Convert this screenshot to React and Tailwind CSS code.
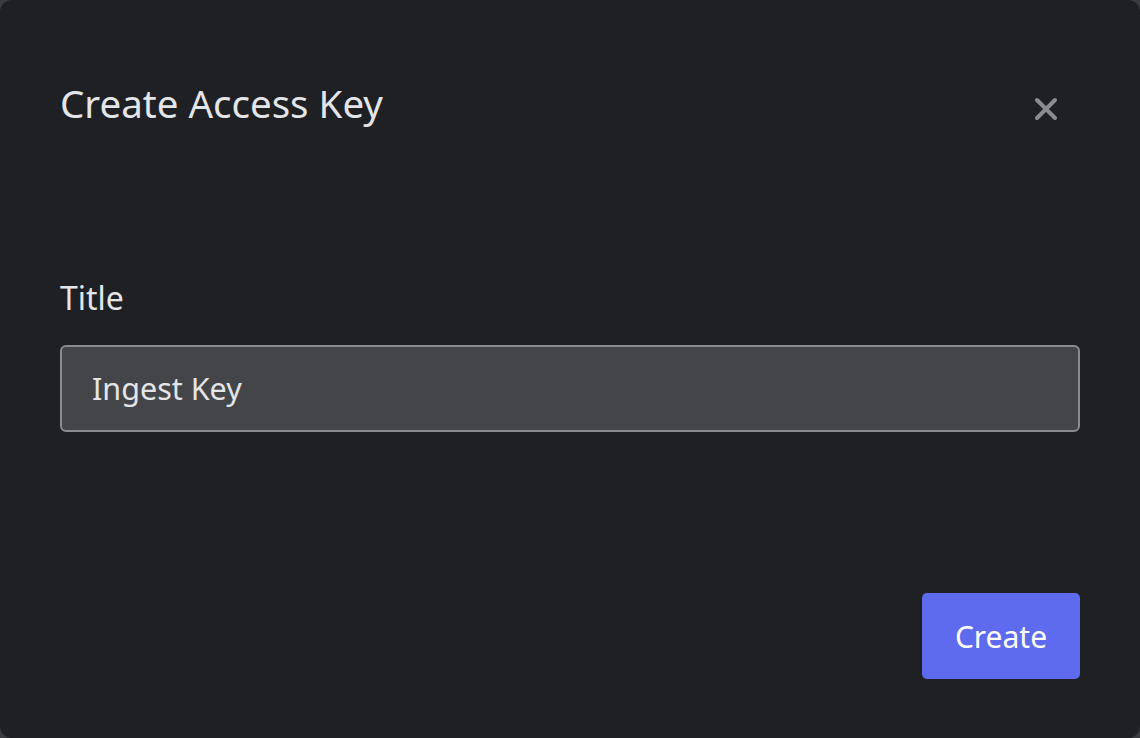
import React from 'react'

const font = { fontFamily: '"Noto Sans", "Open Sans", sans-serif' }

export default function App() {
  return (
    <div className="h-[738px] w-[1140px] bg-[#3a3b3e]" style={font}>
      <div className="flex h-full w-full flex-col rounded-[12px] bg-[#1f2023] px-[60px] pt-[78px] pb-[59px]">
        {/* Header */}
        <div className="flex items-start justify-between">
          <h2 className="text-[38.5px] leading-[50px] font-normal text-[#e3e5e8]">
            Create Access Key
          </h2>
          <button type="button" className="mr-[22px] mt-[19px] text-[#8b8c8f]">
            <svg width="24" height="24" viewBox="0 0 24 24" fill="none">
              <path d="M3 3L21 21M21 3L3 21" stroke="currentColor" strokeWidth="4" strokeLinecap="round" />
            </svg>
          </button>
        </div>

        {/* Field */}
        <label className="mt-[150px] block text-[32px] leading-[40px] text-[#e3e5e8]">Title</label>
        <div className="mt-[27px] flex h-[87px] items-center rounded-[6px] border-2 border-[#8a8b8e] bg-[#444549] px-[30px]">
          <span className="text-[30.5px] text-[#e3e5e8]">Ingest Key</span>
        </div>

        {/* Footer */}
        <div className="mt-auto flex justify-end">
          <button
            type="button"
            className="flex h-[86px] w-[158px] items-center justify-center rounded-[5px] bg-[#5e6bee] text-[30px] text-white"
          >
            Create
          </button>
        </div>
      </div>
    </div>
  )
}
